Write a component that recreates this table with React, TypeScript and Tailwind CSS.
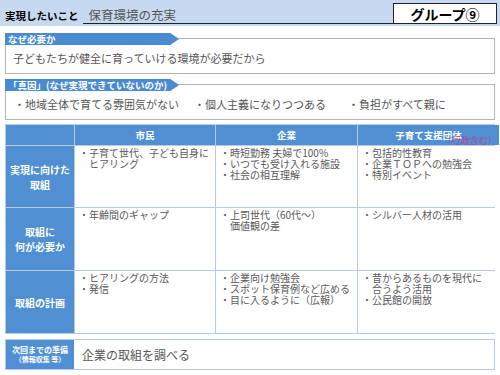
const font = { fontFamily: '"Noto Sans CJK JP", "Noto Sans", sans-serif' }

const rows = [
  {
    label: ['実現に向けた', '取組'],
    cells: [
      ['・子育て世代、子ども自身に', '　ヒアリング'],
      ['・時短勤務 夫婦で100%', '・いつでも受け入れる施設', '・社会の相互理解'],
      ['・包括的性教育', '・企業ＴＯＰへの勉強会', '・特別イベント'],
    ],
  },
  {
    label: ['取組に', '何が必要か'],
    cells: [['・年齢間のギャップ'], ['・上司世代（60代〜）', '　価値観の差'], ['・シルバー人材の活用']],
  },
  {
    label: ['取組の計画'],
    cells: [
      ['・ヒアリングの方法', '・発信'],
      ['・企業向け勉強会', '・スポット保育例など広める', '・目に入るように（広報）'],
      ['・昔からあるものを現代に', '　合うよう活用', '・公民館の開放'],
    ],
  },
]

function Tab({ children }: { children: React.ReactNode }) {
  return (
    <div className="absolute left-[-1px] top-[-6px] h-[12px] w-[174px] whitespace-nowrap bg-[#4a8ad0] pl-[3px] text-[9.5px] font-bold leading-[12px] text-white [clip-path:polygon(0_0,95%_0,100%_50%,95%_100%,0_100%)]">
      {children}
    </div>
  )
}

export default function App() {
  return (
    <div className="h-[375px] w-[500px] overflow-hidden bg-white" style={font}>
      <header className="flex h-[26px] items-start bg-[#c6d9f0]">
        <div className="pl-[5px] pt-[9px] text-[10.5px] font-bold leading-[14px] text-black">実現したいこと</div>
        <div className="ml-[4px] mt-[3px] h-[21px] flex-1 border-b border-[#222] pl-[6px] pt-[3px] text-[12.5px] leading-[17px] text-[#555]">
          保育環境の充実
        </div>
        <div className="mr-[3px] mt-[3px] flex h-[21px] w-[104px] items-center justify-center border-[1.5px] border-[#222] bg-white text-[14px] font-bold leading-none text-black">
          グループ⑨
        </div>
      </header>

      <div className="px-[5px]">
        <section className="relative mt-[12px] flex h-[36px] items-center whitespace-nowrap border border-[#b3b3b3] pl-[7px] pt-[4px] text-[11px] text-[#555]">
          <Tab>なぜ必要か</Tab>
          子どもたちが健全に育っていける環境が必要だから
        </section>

        <section className="relative mt-[10px] flex h-[36px] items-center whitespace-nowrap border border-[#b3b3b3] pl-[8px] pt-[4px] text-[11px] text-[#555]">
          <Tab>「真因」(なぜ実現できていないのか)</Tab>
          <span className="w-[180px]">・地域全体で育てる雰囲気がない</span>
          <span className="w-[154px]">・個人主義になりつつある</span>
          <span>・負担がすべて親に</span>
        </section>

        <div className="mt-[4px] grid grid-cols-[68px_140px_141px_141px] grid-rows-[20px_61px_62px_62px] gap-px border border-[#b5cae3] bg-[#b5cae3]">
          <div className="bg-[#4f8fd2]" />
          <div className="flex items-center justify-center bg-[#4f8fd2] text-[9.5px] font-bold text-white">市民</div>
          <div className="flex items-center justify-center bg-[#4f8fd2] text-[9.5px] font-bold text-white">企業</div>
          <div className="relative flex items-center justify-center bg-[#4f8fd2] text-[9.5px] font-bold text-white">
            子育て支援団体
            <span className="absolute right-[2px] top-[11px] text-[9px] font-normal leading-[10px] text-[#b3479a]">（行政含む）</span>
          </div>
          {rows.map((r) => (
            <>
              <div key={r.label[0]} className="flex flex-col items-center justify-center bg-[#4f8fd2] text-[10px] font-bold leading-[15px] text-white">
                {r.label.map((l) => (
                  <span key={l}>{l}</span>
                ))}
              </div>
              {r.cells.map((c, i) => (
                <div key={i} className="bg-white px-[4px] pt-[1px] text-[10px] leading-[11px] text-[#595959]">
                  {c.map((line) => (
                    <div key={line}>{line}</div>
                  ))}
                </div>
              ))}
            </>
          ))}
        </div>

        <div className="mt-[5px] flex h-[31px] border border-[#b5cae3]">
          <div className="flex w-[68px] flex-col items-center justify-center bg-[#4f8fd2] font-bold text-white">
            <span className="text-[8px] leading-[10px]">次回までの準備</span>
            <span className="text-[7px] leading-[9px]">（情報収集 等）</span>
          </div>
          <div className="flex flex-1 items-center pl-[8px] text-[12px] text-[#555]">企業の取組を調べる</div>
        </div>
      </div>
    </div>
  )
}
